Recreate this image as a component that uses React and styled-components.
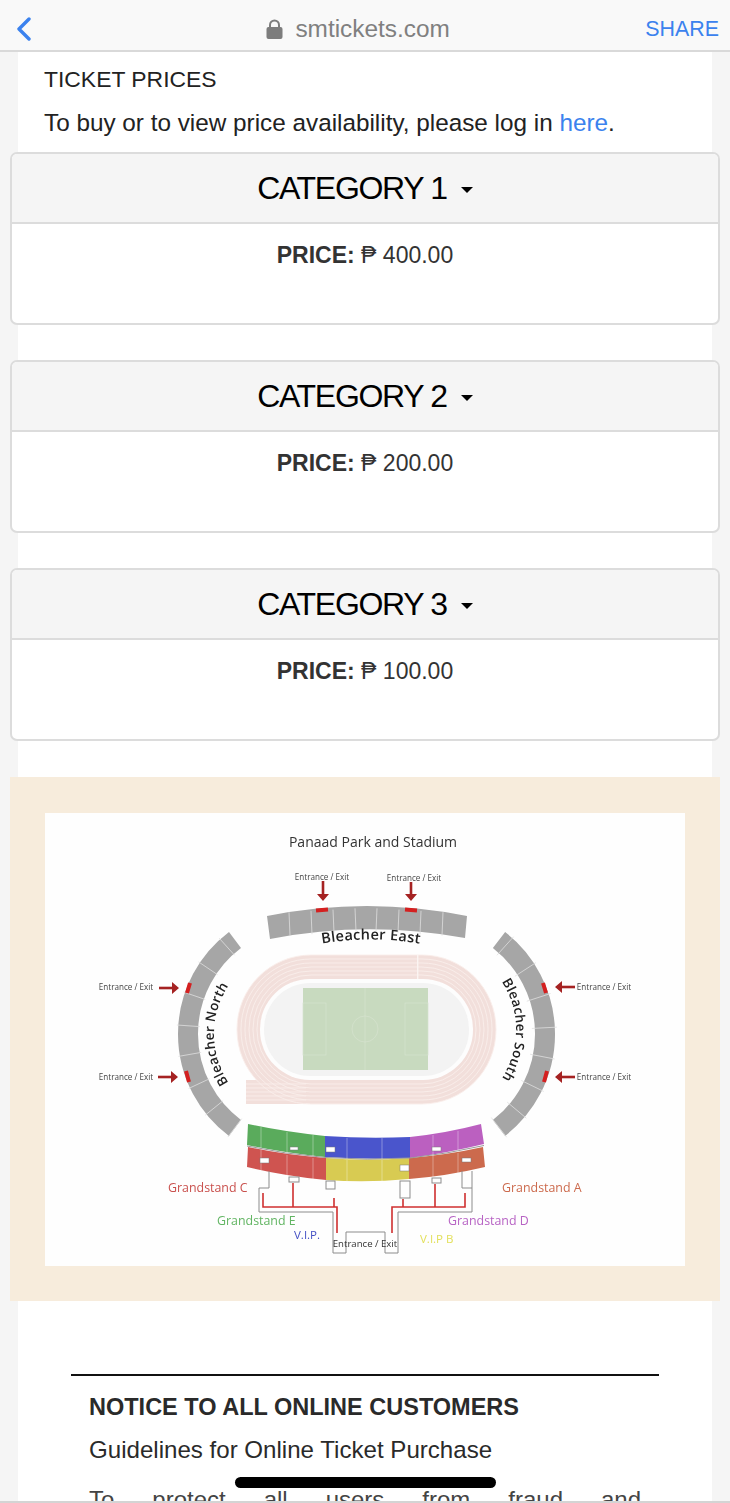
import styled, { createGlobalStyle } from 'styled-components';

const GlobalStyle = createGlobalStyle`
  html, body {
    margin: 0;
    padding: 0;
    background: #f5f5f5;
  }
  * {
    box-sizing: border-box;
  }
`;

const categories = [
  { name: 'CATEGORY 1', price: '400.00' },
  { name: 'CATEGORY 2', price: '200.00' },
  { name: 'CATEGORY 3', price: '100.00' },
];

// ticks across a curved bleacher, angles in degrees from the circle centre
const arcTicks = (cx, cy, inner, outer, angles) =>
  angles.map((deg) => {
    const rad = (deg * Math.PI) / 180;
    return {
      x1: cx + inner * Math.cos(rad),
      y1: cy + inner * Math.sin(rad),
      x2: cx + outer * Math.cos(rad),
      y2: cy + outer * Math.sin(rad),
    };
  });

const northTicks = arcTicks(305.5, 1033, 106, 129, [127, 141, 155, 170, 184, 199, 214, 228]);
const southTicks = arcTicks(426, 1033, 106, 131, [-48, -33, -18, -3, 11, 26, 40, 52]);
const eastTicks = [289, 311, 333, 355, 377, 399, 421, 443];
const laneInsets = [0, 4, 8, 12, 16, 20];
const straightLanes = [1083, 1087, 1091, 1095, 1099];

const EntranceLabel = ({ x, y }) => (
  <SmallLabel x={x} y={y} textAnchor="middle">
    Entrance / Exit
  </SmallLabel>
);

const StadiumMap = () => (
  <MapSvg viewBox="45 812 640 453" aria-label="Panaad Park and Stadium seat map">
    <rect x="45" y="812" width="640" height="453" fill="#fefefe" />
    <MapTitle x="373" y="846" textAnchor="middle">
      Panaad Park and Stadium
    </MapTitle>

    {/* bleachers */}
    <path d="M267 915 Q367 895 467 915 L465 937 Q367 919 270 938 Z" fill="#a6a6a6" />
    {eastTicks.map((x, i) => (
      <line key={x} x1={x} y1={i < 4 ? 906 + (4 - i) * 1.3 : 906 + (i - 3) * 1.3} x2={x + (i < 4 ? 1 : -1)} y2={i < 4 ? 929 + (4 - i) * 1.4 : 929 + (i - 3) * 1.4} stroke="#dedede" strokeWidth="0.8" />
    ))}
    <path d="M235 939 A117.5 117.5 0 0 0 235 1127" fill="none" stroke="#a6a6a6" strokeWidth="20" />
    {northTicks.map((t, i) => (
      <line key={i} {...t} stroke="#dedede" strokeWidth="0.8" />
    ))}
    <path d="M499 939 A119 119 0 0 1 499 1127" fill="none" stroke="#a6a6a6" strokeWidth="20" />
    {southTicks.map((t, i) => (
      <line key={i} {...t} stroke="#dedede" strokeWidth="0.8" />
    ))}

    {/* gates */}
    <path d="M316 909.5 L328 908.5 M405 908.5 L417 909.5" stroke="#d42020" strokeWidth="4" />
    <path d="M190 982 L187 992 M186 1070 L189 1081 M543 982 L546 992 M547 1070 L544 1081" stroke="#d42020" strokeWidth="4" />

    {/* arrows */}
    <g stroke="#a52222" strokeWidth="2.6" fill="#a52222">
      <line x1="323" y1="880" x2="323" y2="895" />
      <line x1="411" y1="881" x2="411" y2="895" />
      <line x1="159" y1="987" x2="175" y2="987" />
      <line x1="158" y1="1076" x2="174" y2="1076" />
      <line x1="559" y1="986" x2="575" y2="986" />
      <line x1="559" y1="1076" x2="575" y2="1076" />
      <path d="M317 893 H329 L323 900 Z M405 893 H417 L411 900 Z" stroke="none" />
      <path d="M172 981 L179 987 L172 993 Z M171 1070 L178 1076 L171 1082 Z" stroke="none" />
      <path d="M562 980 L555 986 L562 992 Z M562 1070 L555 1076 L562 1082 Z" stroke="none" />
    </g>
    <EntranceLabel x="322" y="879" />
    <EntranceLabel x="414" y="880" />
    <EntranceLabel x="126" y="989" />
    <EntranceLabel x="126" y="1079" />
    <EntranceLabel x="604" y="989" />
    <EntranceLabel x="604" y="1079" />

    {/* running track */}
    <rect x="246" y="1079" width="60" height="24" fill="#f2dfdb" />
    {laneInsets.map((inset, i) => (
      <rect
        key={inset}
        x={237 + inset}
        y={954 + inset}
        width={259 - inset * 2}
        height={149 - inset * 2}
        rx={74 - inset}
        fill={i === 0 ? '#f2dfdb' : 'none'}
        stroke="#f9eeeb"
        strokeWidth="0.9"
      />
    ))}
    {straightLanes.map((y) => (
      <line key={y} x1="246" y1={y} x2="306" y2={y} stroke="#f9eeeb" strokeWidth="0.9" />
    ))}
    <rect x="417" y="954" width="1.4" height="24" fill="#fbf4f2" />
    <rect x="260" y="978" width="213" height="101" rx="50" fill="#fdfdfd" />
    <rect x="264" y="982" width="205" height="93" rx="46" fill="#f3f3f3" />
    <rect x="303" y="987" width="125" height="82" fill="#c8dabf" />
    <g fill="none" stroke="#d5e3cf" strokeWidth="0.7">
      <line x1="365" y1="987" x2="365" y2="1069" />
      <circle cx="365" cy="1028" r="13" />
      <rect x="303" y="1002" width="23" height="52" />
      <rect x="405" y="1002" width="23" height="52" />
    </g>

    {/* bleacher names */}
    <defs>
      <path id="east-curve" d="M300 947 Q370 930 442 947" />
      <path id="north-curve" d="M229 1082 A87.5 87.5 0 0 1 229 984" />
      <path id="south-curve" d="M500 978 A89 89 0 0 1 500 1080" />
    </defs>
    <CurveLabel $size={14.5}>
      <textPath href="#east-curve" startOffset="50%" textAnchor="middle">
        Bleacher East
      </textPath>
    </CurveLabel>
    <CurveLabel>
      <textPath href="#north-curve" startOffset="50%" textAnchor="middle">
        Bleacher North
      </textPath>
    </CurveLabel>
    <CurveLabel>
      <textPath href="#south-curve" startOffset="50%" textAnchor="middle">
        Bleacher South
      </textPath>
    </CurveLabel>

    {/* grandstands */}
    <path d="M248 1123 Q285 1131 325 1135 V1156 Q285 1152 247 1144 Z" fill="#5aab5c" />
    <path d="M325 1135 Q367 1138 410 1136 V1157 Q367 1159 325 1156 Z" fill="#4a55cc" />
    <path d="M410 1136 Q447 1132 481 1123 L484 1143 Q447 1152 410 1157 Z" fill="#bb60c0" />
    <path d="M248 1146 Q285 1154 326 1157 V1179 Q285 1175 247 1166 Z" fill="#cf5450" />
    <path d="M326 1157 Q367 1160 409 1157 V1178 Q367 1182 326 1179 Z" fill="#d8cb52" />
    <path d="M409 1157 Q447 1154 483 1146 L485 1166 Q447 1175 409 1178 Z" fill="#cc6a4d" />
    <path d="M247 1145 Q285 1153 325 1156.5 Q367 1159.5 410 1157 Q447 1153 484 1144.5" fill="none" stroke="#9a9a9a" strokeWidth="1" />
    <g stroke="#ffffff" strokeOpacity="0.35" strokeWidth="1">
      <path d="M261 1126 V1147 M287 1131 V1152 M313 1134 V1155 M347 1137 V1158 M382 1137 V1158 M433 1134 V1155 M458 1130 V1150" />
      <path d="M261 1149 V1169 M287 1154 V1175 M313 1157 V1178 M347 1159 V1180 M382 1159 V1180 M433 1155 V1176 M458 1152 V1172" />
    </g>
    <g fill="#ffffff" stroke="#777" strokeWidth="0.5">
      <rect x="260" y="1157" width="9" height="5" />
      <rect x="290" y="1146" width="8" height="3" />
      <rect x="326" y="1146" width="9" height="5" />
      <rect x="400" y="1164" width="9" height="6" />
      <rect x="432" y="1146" width="9" height="4" />
      <rect x="462" y="1157" width="9" height="4" />
    </g>

    {/* walkways */}
    <g fill="none" stroke="#8c8c8c" strokeWidth="1">
      <path d="M269 1170 V1187 H259 V1211 H333 V1252 H346 V1231 H385 V1252 H398 V1211 H472 V1170 M462 1170 V1187 H472" />
      <rect x="289" y="1176" width="10" height="5" />
      <rect x="326" y="1180" width="9" height="8" />
      <rect x="400" y="1180" width="10" height="17" />
      <rect x="432" y="1177" width="9" height="5" />
    </g>
    <g fill="none" stroke="#cf3030" strokeWidth="1.6">
      <path d="M263 1192 V1206 H337 V1232 M293 1182 V1206 M334 1197 V1206" />
      <path d="M392 1232 V1206 H465 V1192 M435 1183 V1206 M403 1198 V1206" />
    </g>
    <GateLabel x="365" y="1246" textAnchor="middle">
      Entrance / Exit
    </GateLabel>

    <StandLabel x="168" y="1191" $color="#c9504d">Grandstand C</StandLabel>
    <StandLabel x="502" y="1191" $color="#cc6a4d">Grandstand A</StandLabel>
    <StandLabel x="217" y="1224" $color="#62b563">Grandstand E</StandLabel>
    <StandLabel x="448" y="1224" $color="#b763c4">Grandstand D</StandLabel>
    <StandLabel x="294" y="1238" $color="#4450c4" $size={11.5}>V.I.P.</StandLabel>
    <StandLabel x="420" y="1242" $color="#e3e05c" $size={11.5}>V.I.P B</StandLabel>
  </MapSvg>
);

const App = () => {
  return (
    <>
      <GlobalStyle />
      <Screen>
        <TopBar>
          <BackButton>
            <svg width="16" height="24" viewBox="0 0 16 24" fill="none">
              <path d="M13 2 L3 12 L13 22" stroke="#3b82ee" strokeWidth="3.4" strokeLinecap="round" strokeLinejoin="round" />
            </svg>
          </BackButton>
          <Address>
            <svg width="17" height="20" viewBox="0 0 17 20" fill="none">
              <path d="M4 9 V6 a4.5 4.5 0 0 1 9 0 V9" stroke="#7d7d7d" strokeWidth="2" />
              <rect x="0.5" y="8" width="16" height="12" rx="2" fill="#7d7d7d" />
            </svg>
            <span>smtickets.com</span>
          </Address>
          <ShareLink>SHARE</ShareLink>
        </TopBar>

        <Column>
          <SectionTitle>TICKET PRICES</SectionTitle>
          <Intro>
            To buy or to view price availability, please log in <TextLink>here</TextLink>.
          </Intro>

          <PanelList>
            {categories.map((category) => (
              <Panel key={category.name}>
                <PanelHeader>
                  {category.name}
                  <Caret />
                </PanelHeader>
                <PanelBody>
                  <strong>PRICE:</strong> ₱ {category.price}
                </PanelBody>
              </Panel>
            ))}
          </PanelList>

          <MapBand>
            <StadiumMap />
          </MapBand>

          <Notice>
            <NoticeTitle>NOTICE TO ALL ONLINE CUSTOMERS</NoticeTitle>
            <NoticeSubtitle>Guidelines for Online Ticket Purchase</NoticeSubtitle>
            <NoticeText>To protect all users from fraud and</NoticeText>
          </Notice>
        </Column>

        <HomeIndicator />
        <BottomEdge />
      </Screen>
    </>
  );
};

const Screen = styled.div`
  position: relative;
  width: 730px;
  height: 1503px;
  overflow: hidden;
  background: #f5f5f5;
  font-family: 'Liberation Sans', Arial, sans-serif;
  color: #333;
`;
const TopBar = styled.header`
  display: flex;
  align-items: center;
  justify-content: space-between;
  height: 52px;
  padding: 8px 11px 0 16px;
  background: #f9f9f9;
  border-bottom: 2px solid #d9d9d9;
`;
const BackButton = styled.div`
  display: flex;
  width: 16px;
`;
const Address = styled.div`
  display: flex;
  align-items: center;
  gap: 12px;
  font-size: 24.4px;
  color: #808080;
  margin-left: 39px;
`;
const ShareLink = styled.a`
  font-size: 21.4px;
  color: #3b82ee;
`;
const Column = styled.main`
  width: 694px;
  margin-left: 18px;
  background: #fff;
  height: 1451px;
`;
const SectionTitle = styled.h2`
  margin: 0;
  padding: 14px 0 0 26px;
  font-size: 22.9px;
  font-weight: 400;
  line-height: 26px;
  color: #222;
`;
const Intro = styled.p`
  margin: 0;
  padding: 18px 0 0 26px;
  font-size: 24.3px;
  line-height: 26px;
  color: #222;
`;
const TextLink = styled.a`
  color: #3b82ee;
`;
const PanelList = styled.div`
  display: flex;
  flex-direction: column;
  gap: 35px;
  margin: 16px -8px 0;
`;
const Panel = styled.section`
  height: 173px;
  background: #fff;
  border: 2px solid #dcdcdc;
  border-radius: 7px;
  overflow: hidden;
`;
const PanelHeader = styled.h3`
  display: flex;
  align-items: center;
  justify-content: center;
  height: 70px;
  margin: 0;
  background: #f5f5f5;
  border-bottom: 2px solid #dcdcdc;
  font-size: 32px;
  font-weight: 400;
  letter-spacing: -1.3px;
  color: #000;
`;
const Caret = styled.span`
  width: 0;
  height: 0;
  margin: 4px 0 0 14px;
  border-left: 6.5px solid transparent;
  border-right: 6.5px solid transparent;
  border-top: 6.5px solid #000;
`;
const PanelBody = styled.div`
  padding-top: 17px;
  text-align: center;
  font-size: 23px;
  line-height: 28px;
  color: #333;
`;
const MapBand = styled.div`
  display: flex;
  justify-content: center;
  align-items: center;
  height: 524px;
  margin: 36px -8px 0;
  background: #f7ecdc;
`;
const MapSvg = styled.svg`
  display: block;
  width: 640px;
  height: 453px;
  filter: blur(0.45px);
`;
const MapTitle = styled.text`
  font-family: 'Open Sans', sans-serif;
  font-size: 14px;
  fill: #333;
`;
const SmallLabel = styled.text`
  font-family: 'Open Sans', sans-serif;
  font-size: 8.1px;
  fill: #444;
`;
const GateLabel = styled.text`
  font-family: 'Open Sans', sans-serif;
  font-size: 9.6px;
  fill: #333;
`;
const CurveLabel = styled.text`
  font-family: 'Open Sans', sans-serif;
  font-size: ${(props) => props.$size || 13.4}px;
  font-weight: 600;
  letter-spacing: 0.3px;
  fill: #222;
`;
const StandLabel = styled.text`
  font-family: 'Open Sans', sans-serif;
  font-size: ${(props) => props.$size || 12.4}px;
  fill: ${(props) => props.$color};
`;
const Notice = styled.div`
  margin: 73px 53px 0;
  border-top: 2px solid #111;
  padding: 17px 18px 0;
`;
const NoticeTitle = styled.h4`
  margin: 0;
  font-size: 23.5px;
  line-height: 28px;
  font-weight: 700;
  color: #2a2a2a;
`;
const NoticeSubtitle = styled.p`
  margin: 15px 0 0;
  font-size: 24.1px;
  line-height: 28px;
  color: #2a2a2a;
`;
const NoticeText = styled.p`
  margin: 22px 0 0;
  font-size: 24px;
  line-height: 28px;
  color: #444;
  text-align: justify;
  text-align-last: justify;
`;
const HomeIndicator = styled.div`
  position: absolute;
  left: 235px;
  top: 1477px;
  width: 261px;
  height: 11px;
  border-radius: 6px;
  background: #000;
`;
const BottomEdge = styled.div`
  position: absolute;
  left: 0;
  right: 0;
  bottom: 0;
  height: 2px;
  background: #d4d4d4;
`;

export default App;
